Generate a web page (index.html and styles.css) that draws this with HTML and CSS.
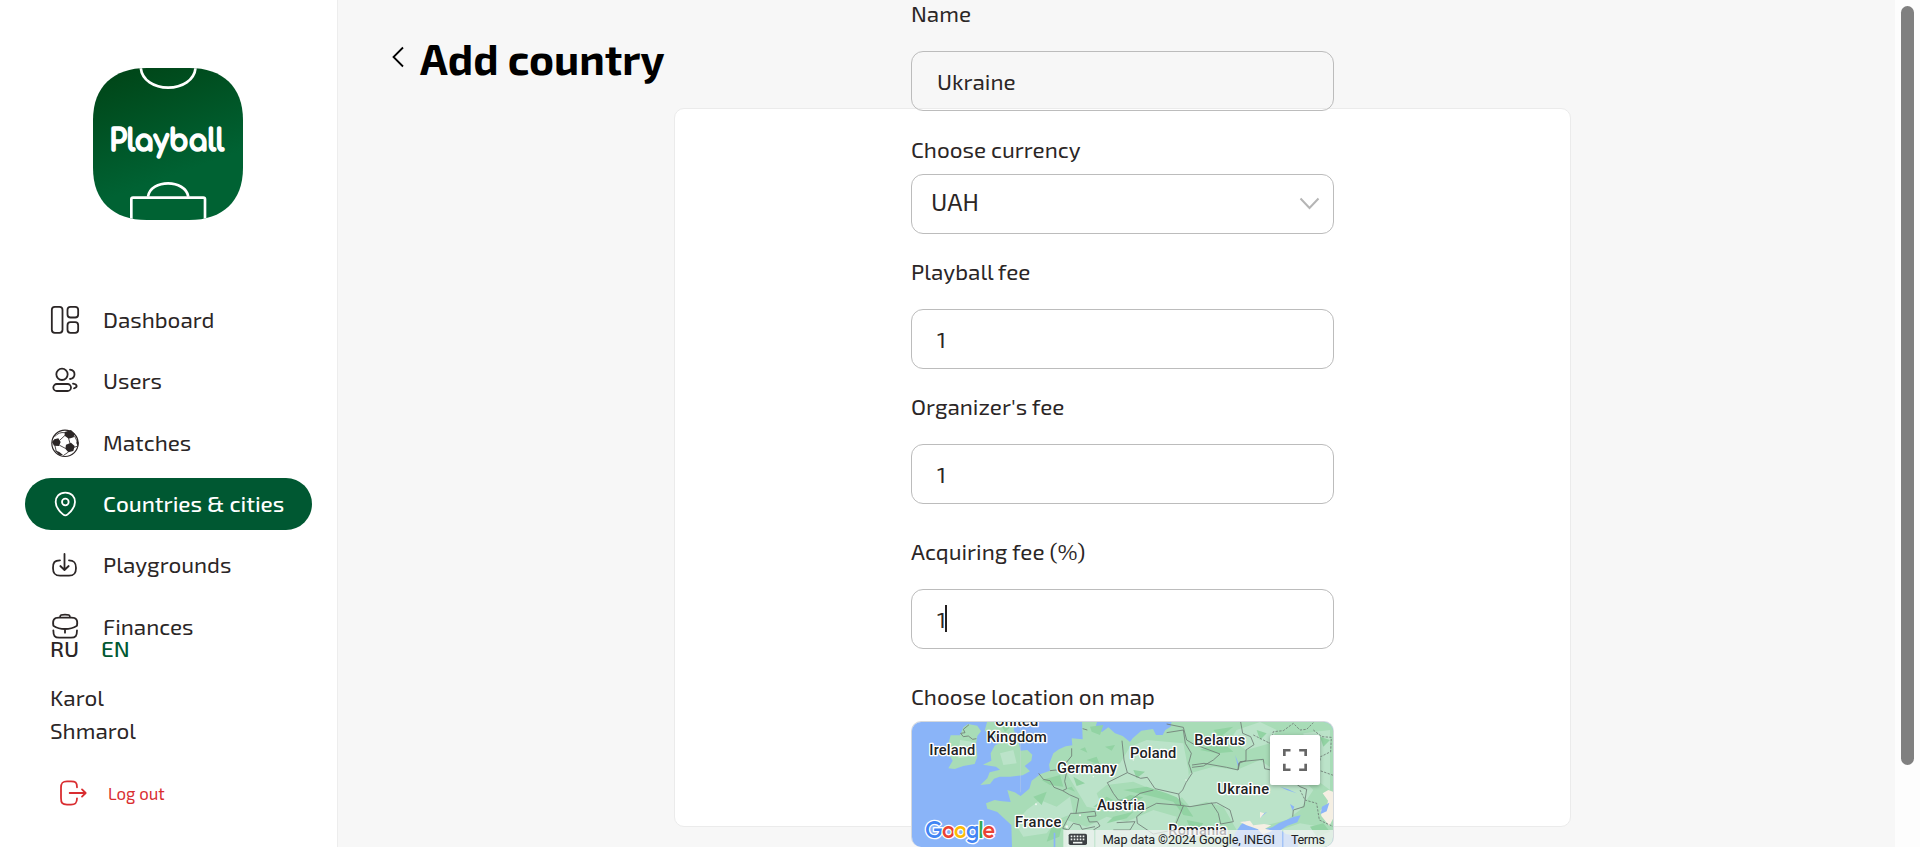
FILE: index.html
```html
<!DOCTYPE html>
<html lang="en">
<head>
<meta charset="utf-8">
<title>Playball – Add country</title>
<link rel="stylesheet" href="styles.css">
</head>
<body>
<div class="app">
  <aside class="sidebar">
    <svg class="logo" viewBox="279 84 450 456" role="img" aria-label="Playball">
      <defs>
        <linearGradient id="pitch" x1="0.15" y1="0" x2="0.5" y2="1">
          <stop offset="0" stop-color="#004517"/><stop offset="0.75" stop-color="#006233"/>
        </linearGradient>
        <clipPath id="badge"><path id="badgeShape" d="M279 240C279 140 340 84 440 84H568C668 84 729 140 729 240V384C729 484 668 540 568 540H440C340 540 279 484 279 384Z"/></clipPath>
      </defs>
      <g clip-path="url(#badge)">
        <rect x="279" y="84" width="450" height="456" fill="url(#pitch)"/>
        <g fill="none" stroke="#fff" stroke-width="8">
          <path d="M422 80C426 164 583 164 587 80"/>
          <path d="M394 545V478Q394 473 399 473H610Q615 473 615 478V545"/>
          <path d="M444 470C452 417 556 417 565 470"/>
        </g>
      </g>
      <text class="logo-text" x="328" y="333" textLength="345" lengthAdjust="spacingAndGlyphs">Playball</text>
    </svg>

    <nav class="nav">
      <a class="nav-item"><svg class="icon" viewBox="150 45 90 90"><rect x="155.500" y="50.500" width="32" height="78" rx="9"/><rect x="202.500" y="50.500" width="32" height="32" rx="9"/><rect x="202.500" y="96.500" width="32" height="32" rx="9"/></svg><span>Dashboard</span></a>
      <a class="nav-item"><svg class="icon" viewBox="150 229 90 90"><circle cx="186" cy="254" r="17"/><rect x="160" y="283" width="53" height="21" rx="10.500" ry="10.500"/><path d="M210 240C228 242 228 266 210 268M219 282C233 284 233 293 222 296"/></svg><span>Users</span></a>
      <a class="nav-item"><svg class="icon" viewBox="150 413 90 90"><circle cx="195" cy="459" r="39.500" stroke-width="3.500"/><path class="solid" d="M194 425L213 419L224 430L221 441L206 445L194 436ZM163 447L175 444L182 455L177 467L162 466L156 455ZM198 463L213 457L224 467L220 482L205 486L196 475ZM165 480L178 485L190 495L177 493ZM231 445L236 457L234 470L229 458Z"/><path stroke-width="2.500" d="M206 445L210 459M194 436L180 449M179 465L196 474M194 427Q176 424 165 438M224 438L230 450M222 471L231 468M204 486L191 495M165 467L169 484"/></svg><span>Matches</span></a>
      <a class="nav-item active"><svg class="icon" viewBox="150 57 90 90"><path d="M196 68C177 68 167 81 167 96C167 113 178 124 189 133Q196 139 203 133C214 124 225 113 225 96C225 81 215 68 196 68Z"/><circle cx="196" cy="96" r="10"/></svg><span>Countries &amp; cities</span></a>
      <a class="nav-item"><svg class="icon" viewBox="150 241 90 90"><path d="M180 272C163 272 159 279 159 295S164 318 180 318H207C223 318 228 311 228 295S223 272 207 272M193.500 253V300M181 289L193.500 301L206 289"/></svg><span>Playgrounds</span></a>
      <a class="nav-item"><svg class="icon" viewBox="150 425 90 90"><path d="M180 442C180 433 184 433 195 433S210 433 210 442M160 466C157 448 162 442 177 442H214C229 442 234 448 231 466Q215 476 195 476T160 466ZM160 480C160 497 164 502 178 502H213C227 502 231 497 231 480M195 476V487"/></svg><span>Finances</span></a>
    </nav>

    <div class="langs"><span class="ru">RU</span><span class="en">EN</span></div>
    <div class="user"><div>Karol</div><div>Shmarol</div></div>
    <a class="logout"><svg class="icon" viewBox="177 474 90 90"><path d="M231 502C231 487 226 484 213 484H201C187 484 183 489 183 503V534C183 549 187 554 201 554H213C226 554 231 550 231 535M209 519H256M246 508L257 519L246 530"/></svg><span>Log out</span></a>
  </aside>

  <main class="main">
    <header class="header">
      <svg class="back" viewBox="0 0 12 22"><path d="M11 1.500L1.500 11L11 20.500"/></svg>
      <h1>Add country</h1>
    </header>
    <section class="card">
      <form class="form">
        <label class="l-name">Name</label>
        <input class="field gap-lg" value="Ukraine">
        <label class="l-cur">Choose currency</label>
        <div class="field select gap-sm"><span>UAH</span><svg class="chev" viewBox="0 0 21 13"><path d="M1.500 1.500L10.500 11L19.500 1.500"/></svg></div>
        <label>Playball fee</label>
        <input class="field gap-lg" value="1">
        <label>Organizer's fee</label>
        <input class="field gap-lg" value="1">
        <label class="far">Acquiring fee (%)</label>
        <div class="editing gap-lg"><input class="field" value="1"><i class="caret"></i></div>
        <label class="far">Choose location on map</label>
        <div class="map gap-sm">
          <svg class="map-svg" viewBox="33 33 1269 378" preserveAspectRatio="none">
            <rect x="33" y="33" width="1269" height="378" fill="#8ab4f8"/>
            <g fill="#a8dcb7">
              <path d="M145 175L158 152L150 138L152 120L146 98L152 76L180 76L190 52L204 42L232 47L243 64L232 78L228 102L232 140L224 162L190 168L164 177Z"/>
              <path d="M262 33H345L341 60L354 90L362 122L382 120L397 134L394 152L374 168L390 184L368 196L330 200L299 200L282 206L270 222L241 225L262 205L269 187L300 179L288 170L249 164L274 152L272 130L284 107L302 96L285 82L254 62Z"/>
              <path d="M336 411L334 345L312 325L292 306L262 296L258 280L284 270L300 273L332 276L322 240L344 247L362 258L388 236L395 212L422 192L450 182L447 164L460 130L477 118L497 109L517 106L515 85L548 88L546 33H592L585 55L606 66L625 52L645 70L668 78L690 96L698 85L724 62L759 57L768 75L788 75L796 60L812 50L815 33H1302V411Z"/>
            </g>
            <g fill="#bbe3c9">
              <path d="M500 190L540 170L590 185L660 160L690 110L740 90L850 100L865 180L870 250L830 270L760 240L700 215L620 225L590 250L610 300L560 290L530 240Z"/>
              <path d="M870 190L940 170L1010 180L1080 150L1130 185L1180 180L1240 240L1200 300L1160 330L1100 345L1010 360L970 290L920 275L870 290L840 255Z"/>
              <path d="M380 300L420 270L470 290L510 260L520 310L470 330L440 370L370 380L345 340ZM500 330L560 350L620 320L680 335L760 300L830 320L800 411H500Z"/>
              <path d="M1010 60L1080 36L1130 60L1110 100L1040 120L990 90ZM1210 70L1290 60V240L1250 210L1220 150ZM1140 360L1200 340L1260 350V411H1130ZM300 130L340 120L350 160L310 165ZM180 90L215 95L205 140L175 145Z"/>
            </g>
            <g fill="#92d3a3">
              <path d="M570 50L610 45L600 75L575 65ZM425 210L480 195L490 230L450 225ZM580 290L620 260L650 275L690 255L730 262L700 280L640 292ZM670 240L740 230L800 250L830 262L860 290L880 320L850 315L820 275L760 260ZM400 260L440 245L425 285ZM455 350L490 330L478 380L440 395ZM770 120L820 125L800 145ZM900 120L960 90L1000 125L950 130ZM940 60L1000 50L960 82ZM860 330L910 340L880 380ZM640 320L700 305L680 325L620 340ZM1070 60L1100 70L1080 90ZM560 150L590 140L600 165ZM700 180L735 185L710 205ZM520 200L555 220L530 228Z"/>
              <path d="M500 235L515 230L525 245ZM540 118L555 112L562 128ZM615 110L645 105L635 122ZM1260 80L1290 90L1270 110ZM1230 350L1270 340L1290 365L1250 380ZM305 48L330 52L315 66Z"/>
            </g>
            <g fill="#8ab4f8">
              <path d="M995 411L1005 370L1022 345L1035 334L1065 348L1090 358L1117 352L1136 340L1180 321L1202 316L1192 337L1162 347L1142 360L1158 372L1190 378L1195 411Z"/>
              <path d="M1005 135L1018 165L1014 170ZM1080 316L1102 305L1080 323ZM1140 230L1165 238L1190 250L1160 240ZM1170 282L1183 290L1178 302ZM461 368L466 368L466 411L461 411Z"/>
            </g>
            <path fill="#f5efe3" d="M1020 336L1050 332L1060 346L1092 342L1114 346L1095 356L1118 362L1088 374L1074 358L1040 346ZM1268 250L1285 240L1302 246V320L1288 348L1264 318L1262 300L1280 292L1284 272ZM1080 306L1093 310L1080 325Z"/>
            <path fill="#8ab4f8" d="M1266 290L1288 278L1280 304L1262 312Z"/>
            <path d="M361.500 33V247" stroke="#ccd4df" fill="none"/>
            <g fill="none" stroke="#6f7b75" stroke-width="2.500">
              <path d="M207 44L190 58L195 68L182 70L190 80L205 78L218 88L229 86M416 190L430 208L450 212L462 232L488 242L500 236L494 214L500 185L497 160L515 138V115M450 182L468 180L494 190M488 242L508 254L536 266L528 310L512 310L488 355L505 360L520 340L540 345L546 358L585 350M528 310L585 304L588 318L562 320L568 336L592 335L600 348L580 360"/>
              <path d="M548 56L562 60M666 92L672 150L682 188L622 218L640 250L655 270M682 188L722 205L742 202L765 236L836 252L848 240L858 218L876 190L866 160L874 130L856 100L850 60L800 68M800 42L850 52L860 90L880 102L960 132L940 150L910 168L876 172M876 165L912 160L980 172L1014 180L1020 155L1090 148L1094 176L1140 186L1200 230L1220 238L1212 290L1180 300L1178 320M1014 180L1016 160L1038 152L1038 120L1062 104L1052 80L1028 70L1022 36"/>
              <path d="M655 270L690 272L720 250L760 240M836 252L842 286L870 290L930 280L950 278L990 300L1000 335L962 342L955 310L934 278M842 286L770 280L740 295L710 320L712 340L760 372L820 360L850 288M650 338L705 335L690 360L640 360"/>
              <path stroke-dasharray="7 4" d="M1060 75L1110 100L1120 65L1150 62L1180 40L1200 60L1220 58L1240 38M1240 60L1265 80L1294 82L1292 125L1262 140L1254 180L1300 196M1200 240L1215 270L1250 280L1258 330L1300 350"/>
            </g>
            <g fill="#eff7ef"><circle cx="408" cy="283" r="3"/><circle cx="540" cy="316" r="3"/><circle cx="700" cy="150" r="2"/><circle cx="858" cy="210" r="2"/><circle cx="500" cy="350" r="4"/><circle cx="580" cy="200" r="2"/></g>
            <g class="place">
              <text x="285" y="49" textLength="130">United</text>
              <text x="260" y="95" textLength="180">Kingdom</text>
              <text x="88" y="136" textLength="138">Ireland</text>
              <text x="471" y="190" textLength="180">Germany</text>
              <text x="345" y="351" textLength="139">France</text>
              <text x="591" y="301" textLength="144">Austria</text>
              <text x="690" y="144" textLength="139">Poland</text>
              <text x="883" y="104" textLength="153">Belarus</text>
              <text x="952" y="252" textLength="155">Ukraine</text>
              <text x="805" y="376" textLength="176">Romania</text>
            </g>
            <text class="google" x="75" y="383" textLength="210"><tspan fill="#4285f4">G</tspan><tspan fill="#ea4335">o</tspan><tspan fill="#fbbc05">o</tspan><tspan fill="#4285f4">g</tspan><tspan fill="#34a853">l</tspan><tspan fill="#ea4335">e</tspan></text>
            <path d="M490 360H583V411H490ZM586 360H1147V411H586ZM1150 360H1302V411H1150Z" fill="#f5f5f5" fill-opacity=".72"/>
            <rect x="506" y="371" width="55" height="34" rx="5" fill="#3c4043"/>
            <g fill="none" stroke="#f1f5f2" stroke-width="5"><path stroke-dasharray="5 4" d="M512 379H557M512 388H557"/><path d="M519 398H547"/></g>
            <g class="legal"><text x="608" y="403" textLength="517">Map data ©2024 Google, INEGI</text><text x="1173" y="403" textLength="102">Terms</text></g>
          </svg>
          <button class="fullscreen" type="button" aria-label="Fullscreen"><svg viewBox="490 117 71 66"><path d="M493.500 138V120.500H512M538 120.500H557.500V138M493.500 161V179.500H512M538 179.500H557.500V161"/></svg></button>
        </div>
      </form>
    </section>
  </main>
  <div class="scrollbar"><div class="thumb"></div></div>
</div>
</body>
</html>
```
FILE: styles.css
```css
* { box-sizing: border-box; }

body {
  margin: 0;
  height: 847px;
  overflow: hidden;
  font-family: "Exo 2", Roboto, sans-serif;
  font-size: 22.500px;
  line-height: 28px;
  color: #2b2626;
  background: #f7f7f7;
}

.app {
  display: grid;
  grid-template-columns: 338px 1fr 25px;
  height: 847px;
}

/* sidebar */
.sidebar {
  display: flex;
  flex-direction: column;
  background: #fff;
  border-right: 1px solid #ededed;
}

.logo {
  width: 150px;
  height: 152px;
  margin: 68px 0 74.200px 93px;
  flex: none;
}

.logo-text {
  font: 700 90px Comfortaa, "Varela Round", Quicksand, Fredoka, Nunito, Lato, sans-serif;
  fill: #fff;
  stroke: #fff;
  stroke-width: 5;
  stroke-linejoin: round;
}

.nav {
  display: flex;
  flex-direction: column;
  gap: 9.300px;
  padding: 0 25px;
}

.nav-item {
  display: flex;
  align-items: center;
  gap: 23px;
  height: 52px;
  padding-left: 25px;
  border-radius: 26px;
  white-space: nowrap;
}

.icon {
  width: 30px;
  height: 30px;
  flex: none;
  fill: none;
  stroke: currentColor;
  stroke-width: 5.400;
  stroke-linecap: round;
  stroke-linejoin: round;
}

.icon .solid { fill: currentColor; stroke: none; }

.active {
  background: #005832;
  color: #fff;
  font-weight: 500;
}

.langs {
  display: flex;
  gap: 23px;
  padding-left: 50px;
  margin-top: -18px;
  height: 28px;
  font-weight: 500;
}

.ru { width: 28px; }
.en { color: #005832; }

.user {
  margin: 18px 0 0 50px;
  line-height: 33px;
}

.logout {
  display: flex;
  align-items: center;
  gap: 19px;
  margin: 28px 0 0 59px;
  height: 36px;
  font-size: 16.800px;
  color: #d92d30;
}

/* page */
.main {
  display: flex;
  flex-direction: column;
}

.header {
  display: flex;
  align-items: center;
  height: 108px;
  flex: none;
  padding-left: 54px;
}

.back {
  width: 12px;
  height: 22px;
  margin-top: 6px;
  fill: none;
  stroke: #000;
  stroke-width: 1.800;
}

h1 {
  margin: 9px 0 0 16px;
  font-size: 42.500px;
  line-height: 50px;
  font-weight: 700;
  color: #000;
}

.card {
  width: 897px;
  height: 719px;
  margin-left: 336px;
  padding-left: 236px;
  background: #fff;
  border: 1px solid #ebebeb;
  border-radius: 10px;
}

.form {
  display: flex;
  flex-direction: column;
  width: 423px;
  margin-top: -133px;
}

.form label {
  height: 28px;
  margin-top: 24px;
  white-space: nowrap;
}

.form .far { margin-top: 34px; }

.gap-lg { margin-top: 23px; }
.gap-sm { margin-top: 10px; }
.form .l-cur { margin-top: 25px; }

.field {
  display: block;
  width: 100%;
  height: 60px;
  padding: 0 25px;
  border: 1px solid #bcbcbc;
  border-radius: 12px;
  background: transparent;
  font: inherit;
  color: inherit;
  outline: none;
}

.select {
  display: flex;
  align-items: center;
  justify-content: space-between;
  padding: 0 13px 4px 19px;
  font-size: 24.500px;
}

.chev {
  width: 21px;
  height: 13px;
  margin-top: 3px;
  fill: none;
  stroke: #b5b5b5;
  stroke-width: 2;
}

.editing { position: relative; }

.caret {
  position: absolute;
  left: 34px;
  top: 16px;
  width: 2px;
  height: 27px;
  background: #231f20;
}

/* map */
.map {
  position: relative;
  width: 423px;
  height: 126px;
  border: 1px solid #d5d9dd;
  border-bottom: 0;
  border-radius: 10px;
  overflow: hidden;
}

.map-svg {
  display: block;
  width: 423px;
  height: 126px;
  margin: -1px 0 0 -1px;
}

.place text {
  font: 500 44px Roboto, sans-serif;
  fill: #202124;
  stroke: #fff;
  stroke-width: 8;
  stroke-linejoin: round;
  paint-order: stroke;
}

.google {
  font: 500 70px "Product Sans", "Google Sans", Outfit, Poppins, Lato, sans-serif;
  stroke: #fff;
  stroke-width: 8;
  stroke-linejoin: round;
  paint-order: stroke;
}

.legal text {
  font: 400 38px Roboto, sans-serif;
  fill: #202124;
}

.fullscreen {
  position: absolute;
  top: 13px;
  right: 13px;
  width: 50px;
  height: 50px;
  display: grid;
  place-items: center;
  padding: 0;
  border: 0;
  border-radius: 2px;
  background: #fff;
  box-shadow: 0 1px 4px rgba(0, 0, 0, .3);
}

.fullscreen svg {
  width: 24px;
  height: 22px;
  fill: none;
  stroke: #666;
  stroke-width: 8;
}

/* scroll track */
.scrollbar {
  background: #fdfdfd;
  padding: 6px 6px 0;
}

.thumb {
  width: 13px;
  height: 759px;
  border-radius: 7px;
  background: #808080;
}
```
